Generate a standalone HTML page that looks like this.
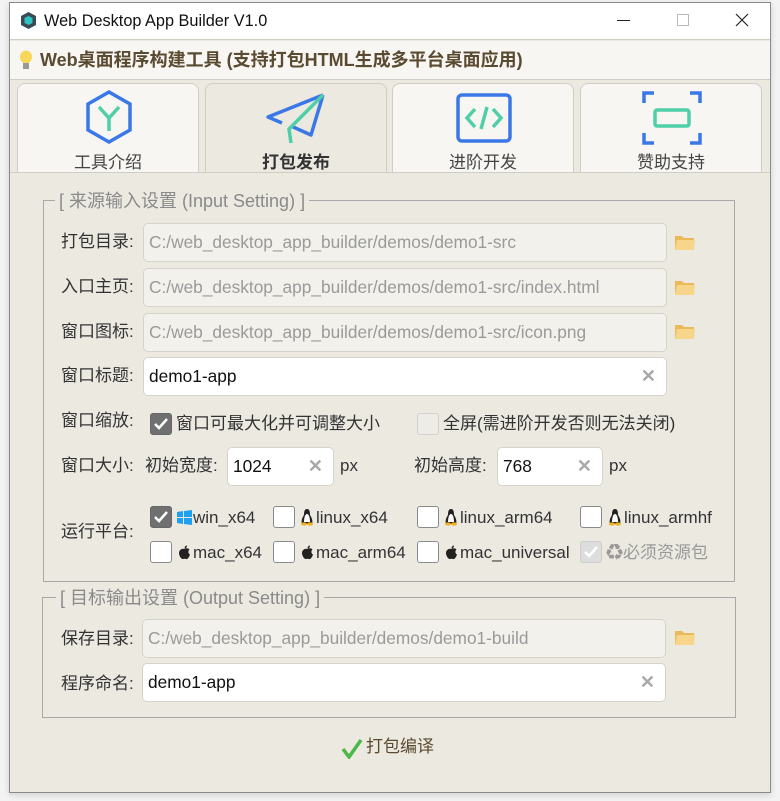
<!DOCTYPE html>
<html><head><meta charset="utf-8"><style>
*{box-sizing:border-box;margin:0;padding:0}
body{width:780px;height:801px;background:#f3f3f3;position:relative;overflow:hidden;font-family:"Liberation Sans","Noto Sans CJK SC",sans-serif;color:#333}
.a{position:absolute}
.win{left:9px;top:2px;width:762px;height:791px;border:1px solid #8a8a8a;background:#ece9e1;box-shadow:0 2px 6px rgba(0,0,0,.15)}
.lbl{position:absolute;font-size:17px;color:#333;line-height:20px;white-space:nowrap}
.inp{position:absolute;height:39px;border:1px solid #d6d3cb;border-radius:5px;background:#f2f1ec;font-size:17.3px;color:#9a9a9a;padding-left:5px;line-height:37px;white-space:nowrap;overflow:hidden}
.inp.w{background:#fff;color:#111}
.x{position:absolute;right:10px;top:0;color:#a8a8a8;font-weight:bold;font-size:18px}
.cb{position:absolute;width:22px;height:22px;border:1px solid #8a8a8a;border-radius:3px;background:#fff}
.cb.on{background:#707070;border-color:#666}
.cb.dis{background:#ddd;border-color:#ccc}
.cb svg{position:absolute;left:2px;top:2px}
.tab{position:absolute;top:83px;width:182px;height:90px;border:1px solid #d0cdc5;border-bottom:none;border-radius:8px 8px 0 0;background:#f7f6f3}
.tab span{position:absolute;left:0;right:0;top:64px;text-align:center;font-size:17px;color:#444}
.gb{position:absolute;border:1px solid #a8a8a8}
.gt{position:absolute;background:#ece9e1;color:#8a8a8a;font-size:18px;padding:0 4px;line-height:20px;white-space:nowrap}
.fold{position:absolute;width:22px;height:16px}
</style></head><body>
<div class="a win"></div>
<div class="a" style="left:10px;top:3px;width:760px;height:37px;background:#fff;border-bottom:1px solid #d0cdc5"></div>
<svg class="a" style="left:19px;top:11px" width="19" height="19" viewBox="0 0 19 19"><path d="M9.5 1 L17 5 L17 14 L9.5 18 L2 14 L2 5Z" fill="#3a4a55"/><path d="M9.5 5 L13.5 7 L13.5 12 L9.5 14 L5.5 12 L5.5 7Z" fill="#2ec4c4"/></svg>
<div class="a" style="left:44px;top:10px;font-size:16.3px;color:#111;line-height:22px">Web Desktop App Builder V1.0</div>
<div class="a" style="left:617px;top:20px;width:13px;height:1px;background:#222"></div>
<div class="a" style="left:677px;top:14px;width:12px;height:12px;border:1px solid #bbb"></div>
<svg class="a" style="left:735px;top:13px" width="14" height="14"><path d="M1 1L13 13M13 1L1 13" stroke="#222" stroke-width="1.2"/></svg>
<div class="a" style="left:10px;top:41px;width:760px;height:39px;background:#f7f6f3;border-bottom:1px solid #d0cdc5"></div>
<svg class="a" style="left:19px;top:50px" width="14" height="22" viewBox="0 0 14 22"><ellipse cx="7" cy="7" rx="6" ry="6.5" fill="#f6d75a"/><rect x="4" y="13" width="6" height="6" fill="#999"/></svg>
<div class="a" style="left:40px;top:49px;font-size:18px;font-weight:bold;color:#5a4a30;line-height:22px;white-space:nowrap">Web桌面程序构建工具 (支持打包HTML生成多平台桌面应用)</div>
<div class="tab" style="left:17px"><span>工具介绍</span>
<svg class="a" style="left:64px;top:5px" width="54" height="56" viewBox="0 0 54 56"><path d="M27 3 L48 15 L48 41 L27 53 L6 41 L6 15Z" fill="none" stroke="#3a78e8" stroke-width="3.5"/><path d="M17 18 L27 29 L37 18 M27 29 L27 42" fill="none" stroke="#4fcfa8" stroke-width="3.5"/></svg></div>
<div class="tab" style="left:205px;background:#ece9e1"><span style="font-weight:bold;color:#333">打包发布</span>
<svg class="a" style="left:60px;top:5px" width="60" height="56" viewBox="0 0 60 56"><path d="M57 6 L2 28 L16 34 M57 6 L45 46 L25 37" fill="none" stroke="#3a78e8" stroke-width="3.5" stroke-linejoin="round"/><path d="M57 6 L23 40 L25 54" fill="none" stroke="#4fcfa8" stroke-width="3.5"/></svg></div>
<div class="tab" style="left:392px"><span>进阶开发</span>
<svg class="a" style="left:62px;top:9px" width="58" height="50" viewBox="0 0 58 50"><rect x="3" y="2" width="52" height="46" rx="4" fill="none" stroke="#3a78e8" stroke-width="3.5"/><path d="M20 16 L12 25 L20 34 M38 16 L46 25 L38 34 M32 14 L26 36" fill="none" stroke="#4fcfa8" stroke-width="3.5"/></svg></div>
<div class="tab" style="left:580px"><span>赞助支持</span>
<svg class="a" style="left:60px;top:6px" width="62" height="56" viewBox="0 0 62 56"><path d="M3 13 V3 H13 M49 3 H59 V13 M59 43 V53 H49 M13 53 H3 V43" fill="none" stroke="#3a78e8" stroke-width="3.5"/><rect x="14" y="20" width="34" height="16" rx="2" fill="none" stroke="#4fcfa8" stroke-width="3.5"/></svg></div>
<div class="a" style="left:10px;top:172px;width:760px;height:1px;background:#d0cdc5"></div>
<div class="gb" style="left:43px;top:200px;width:692px;height:382px"></div>
<div class="gt" style="left:55px;top:191px">[ 来源输入设置 (Input Setting) ]</div>
<div class="lbl" style="left:61px;top:232px">打包目录:</div>
<div class="inp" style="left:143px;top:223px;width:524px">C:/web_desktop_app_builder/demos/demo1-src</div>
<div class="lbl" style="left:61px;top:277px">入口主页:</div>
<div class="inp" style="left:143px;top:268px;width:524px">C:/web_desktop_app_builder/demos/demo1-src/index.html</div>
<div class="lbl" style="left:61px;top:322px">窗口图标:</div>
<div class="inp" style="left:143px;top:313px;width:524px">C:/web_desktop_app_builder/demos/demo1-src/icon.png</div>
<div class="lbl" style="left:61px;top:366px">窗口标题:</div>
<div class="inp w" style="left:143px;top:357px;width:524px">demo1-app<span class="x">✕</span></div>
<svg class="fold" style="left:674px;top:235px" viewBox="0 0 22 16"><path d="M1 1h7l2 2h10v12H1z" fill="#e9b95a"/><path d="M3 5h18l-1 10H1z" fill="#f7d58a"/></svg>
<svg class="fold" style="left:674px;top:280px" viewBox="0 0 22 16"><path d="M1 1h7l2 2h10v12H1z" fill="#e9b95a"/><path d="M3 5h18l-1 10H1z" fill="#f7d58a"/></svg>
<svg class="fold" style="left:674px;top:324px" viewBox="0 0 22 16"><path d="M1 1h7l2 2h10v12H1z" fill="#e9b95a"/><path d="M3 5h18l-1 10H1z" fill="#f7d58a"/></svg>
<div class="lbl" style="left:61px;top:411px">窗口缩放:</div>
<div class="cb on" style="left:150px;top:413px"><svg width="16" height="16"><path d="M2 8l4 4 8-9" fill="none" stroke="#fff" stroke-width="2.5"/></svg></div>
<div class="lbl" style="left:176px;top:414px">窗口可最大化并可调整大小</div>
<div class="cb dis" style="left:417px;top:413px;background:#eeece6;border-color:#d4d1ca"></div>
<div class="lbl" style="left:443px;top:414px">全屏(需进阶开发否则无法关闭)</div>
<div class="lbl" style="left:61px;top:456px">窗口大小:</div>
<div class="lbl" style="left:145px;top:456px">初始宽度:</div>
<div class="inp w" style="left:227px;top:447px;width:107px">1024<span class="x">✕</span></div>
<div class="lbl" style="left:340px;top:456px">px</div>
<div class="lbl" style="left:414px;top:456px">初始高度:</div>
<div class="inp w" style="left:497px;top:447px;width:106px">768<span class="x">✕</span></div>
<div class="lbl" style="left:609px;top:456px">px</div>
<div class="lbl" style="left:61px;top:522px">运行平台:</div>
<div class="cb on" style="left:150px;top:506px"><svg width="16" height="16"><path d="M2 8l4 4 8-9" fill="none" stroke="#fff" stroke-width="2.5"/></svg></div>
<svg class="a" style="left:177px;top:510px" width="15" height="15"><path d="M0 2l6-1v6H0zM7 1l8-1v7H7zM0 8h6v6l-6-1zM7 8h8v7l-8-1z" fill="#1ea0f0"/></svg>
<div class="lbl" style="left:193px;top:508px">win_x64</div>
<div class="cb" style="left:273px;top:506px"></div>
<svg class="a" style="left:300px;top:508px" width="14" height="18"><path d="M7 1c3 0 3 4 3 6 2 3 3 6 2 9H2C1 13 2 10 4 7c0-2 0-6 3-6z" fill="#222"/><path d="M7 6c2 0 3 4 3 8H4c0-4 1-8 3-8z" fill="#fff"/><ellipse cx="4" cy="16" rx="3" ry="1.6" fill="#f0b020"/><ellipse cx="10" cy="16" rx="3" ry="1.6" fill="#f0b020"/></svg>
<div class="lbl" style="left:316px;top:508px">linux_x64</div>
<div class="cb" style="left:417px;top:506px"></div>
<svg class="a" style="left:444px;top:508px" width="14" height="18"><path d="M7 1c3 0 3 4 3 6 2 3 3 6 2 9H2C1 13 2 10 4 7c0-2 0-6 3-6z" fill="#222"/><path d="M7 6c2 0 3 4 3 8H4c0-4 1-8 3-8z" fill="#fff"/><ellipse cx="4" cy="16" rx="3" ry="1.6" fill="#f0b020"/><ellipse cx="10" cy="16" rx="3" ry="1.6" fill="#f0b020"/></svg>
<div class="lbl" style="left:460px;top:508px">linux_arm64</div>
<div class="cb" style="left:580px;top:506px"></div>
<svg class="a" style="left:608px;top:508px" width="14" height="18"><path d="M7 1c3 0 3 4 3 6 2 3 3 6 2 9H2C1 13 2 10 4 7c0-2 0-6 3-6z" fill="#222"/><path d="M7 6c2 0 3 4 3 8H4c0-4 1-8 3-8z" fill="#fff"/><ellipse cx="4" cy="16" rx="3" ry="1.6" fill="#f0b020"/><ellipse cx="10" cy="16" rx="3" ry="1.6" fill="#f0b020"/></svg>
<div class="lbl" style="left:624px;top:508px">linux_armhf</div>
<div class="cb" style="left:150px;top:541px"></div>
<svg class="a" style="left:178px;top:545px" width="13" height="15" viewBox="0 0 13 15"><path d="M6.5 4C8 3 10 3 11.5 4.5 10 5.5 10 8.5 12 9.5 11 12.5 9.5 14.5 8 14 7 13.6 6 13.6 5 14 3.5 14.5 1 11 1 8 1 4.5 4.5 3 6.5 4z" fill="#222"/><path d="M6.5 3.5C6.5 2 7.5 0.5 9 0.5 9 2 8 3.5 6.5 3.5z" fill="#222"/></svg>
<div class="lbl" style="left:193px;top:543px">mac_x64</div>
<div class="cb" style="left:273px;top:541px"></div>
<svg class="a" style="left:301px;top:545px" width="13" height="15" viewBox="0 0 13 15"><path d="M6.5 4C8 3 10 3 11.5 4.5 10 5.5 10 8.5 12 9.5 11 12.5 9.5 14.5 8 14 7 13.6 6 13.6 5 14 3.5 14.5 1 11 1 8 1 4.5 4.5 3 6.5 4z" fill="#222"/><path d="M6.5 3.5C6.5 2 7.5 0.5 9 0.5 9 2 8 3.5 6.5 3.5z" fill="#222"/></svg>
<div class="lbl" style="left:316px;top:543px">mac_arm64</div>
<div class="cb" style="left:417px;top:541px"></div>
<svg class="a" style="left:445px;top:545px" width="13" height="15" viewBox="0 0 13 15"><path d="M6.5 4C8 3 10 3 11.5 4.5 10 5.5 10 8.5 12 9.5 11 12.5 9.5 14.5 8 14 7 13.6 6 13.6 5 14 3.5 14.5 1 11 1 8 1 4.5 4.5 3 6.5 4z" fill="#222"/><path d="M6.5 3.5C6.5 2 7.5 0.5 9 0.5 9 2 8 3.5 6.5 3.5z" fill="#222"/></svg>
<div class="lbl" style="left:460px;top:543px">mac_universal</div>
<div class="cb dis" style="left:580px;top:541px"><svg width="16" height="16"><path d="M2 8l4 4 8-9" fill="none" stroke="#fff" stroke-width="2.5"/></svg></div>
<div class="lbl" style="left:606px;top:543px;color:#999">♻必须资源包</div>
<div class="gb" style="left:42px;top:597px;width:694px;height:121px"></div>
<div class="gt" style="left:56px;top:588px">[ 目标输出设置 (Output Setting) ]</div>
<div class="lbl" style="left:61px;top:629px">保存目录:</div>
<div class="inp" style="left:142px;top:619px;width:524px">C:/web_desktop_app_builder/demos/demo1-build</div>
<svg class="fold" style="left:674px;top:630px" viewBox="0 0 22 16"><path d="M1 1h7l2 2h10v12H1z" fill="#e9b95a"/><path d="M3 5h18l-1 10H1z" fill="#f7d58a"/></svg>
<div class="lbl" style="left:61px;top:674px">程序命名:</div>
<div class="inp w" style="left:142px;top:663px;width:524px">demo1-app<span class="x">✕</span></div>
<svg class="a" style="left:341px;top:737px" width="22" height="22"><path d="M2 12l6 8 12-17" fill="none" stroke="#4cb848" stroke-width="3.5"/></svg>
<div class="lbl" style="left:366px;top:737px;font-size:17px;color:#5a4a30">打包编译</div>
</body></html>
